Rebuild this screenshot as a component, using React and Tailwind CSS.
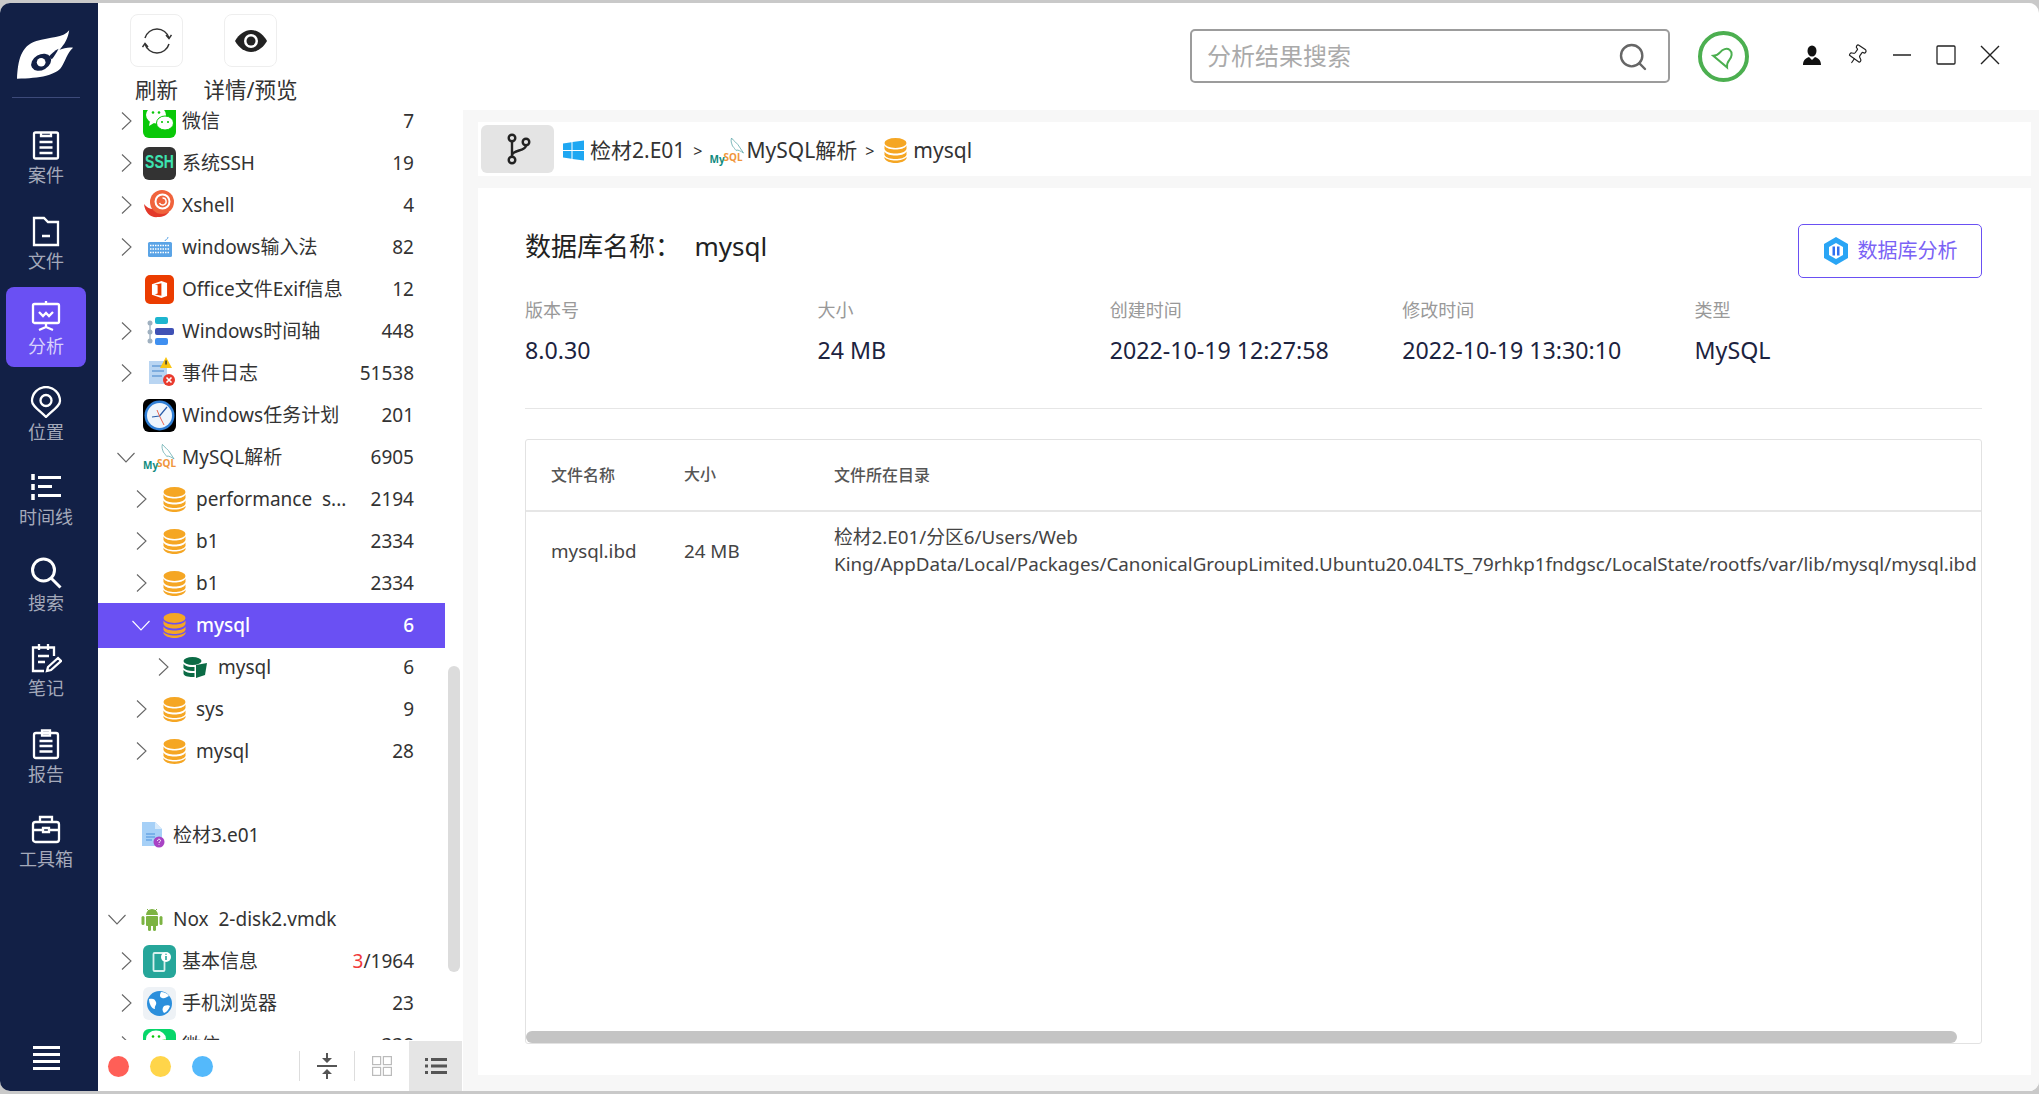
import { Pin, Search } from 'lucide-react';

function Db({ className = 'w-[23px] h-[25px]' }) {
  return (
    <svg viewBox="0 0 23 25" className={className}>
      <ellipse cx="11.5" cy="5" rx="11" ry="5" fill="#f5a623" />
      <path d="M.5 7.5C2 10.5 7 11.5 11.5 11.5S21 10.500 22.500 7.500V11C21 14.500 16 15.500 11.500 15.500S2 14.500.5 11Z" fill="#f5a623" />
      <path d="M.5 13.500C2 16.500 7 17.500 11.500 17.500S21 16.500 22.500 13.500V17C21 20 16 21 11.500 21S2 20 .5 17Z" fill="#f5a623" />
      <path d="M.5 18.800C2 21.500 7 22.500 11.500 22.500S21 21.500 22.500 18.800V20.500C21 23.500 16 25 11.500 25S2 23.500.5 20.500Z" fill="#f5a623" />
    </svg>
  );
}

function MysqlLogo({ small }) {
  return (
    <span className={`relative inline-block ${small ? 'w-[37px] h-[28px]' : 'w-[33px] h-[28px]'}`}>
      <svg viewBox="0 0 34 28" className="absolute inset-0 w-full h-full">
        <path d="M20 1c2 3 6 5 8 9 1 2 3 4 4 6-3-2-5-3-7-3 0 2-2-2-4-4-1-3-2-5-1-8Z" fill="none" stroke="#5fa8ab" strokeWidth="0.8" />
      </svg>
      <span className="absolute left-0 bottom-[1px] text-[10px] leading-none font-bold text-[#0f8a7e]">My</span>
      <span className="absolute left-[14px] bottom-[3px] text-[10px] leading-none font-bold text-[#f0963c]">SQL</span>
    </span>
  );
}

function WeChat({ bg = 'bg-[#09c808]' }) {
  return (
    <span className={`w-[33px] h-[33px] rounded-[6px] flex items-center justify-center ${bg}`}>
      <svg viewBox="0 0 33 33" className="w-[33px] h-[33px]">
        <ellipse cx="13" cy="10" rx="10" ry="8.500" fill="#fff" />
        <path d="M7 16l-1 5 5-3Z" fill="#fff" />
        <ellipse cx="22" cy="18" rx="8.500" ry="7" fill="#fff" stroke="#09c808" strokeWidth="1" />
        <circle cx="10" cy="7.500" r="1.300" fill="#09c808" />
        <circle cx="16" cy="7.500" r="1.300" fill="#09c808" />
        <circle cx="19" cy="17" r="1.100" fill="#09c808" />
        <circle cx="25" cy="17" r="1.100" fill="#09c808" />
      </svg>
    </span>
  );
}

const icons = {
  wechat: <WeChat />,
  wechat2: <WeChat bg="bg-[#07d66a]" />,
  ssh: (
    <span className="w-[33px] h-[33px] rounded-[6px] bg-[#333] flex items-start justify-center pt-[6px] text-[14px] leading-[18px] font-bold text-[#3de3b0] font-['Liberation_Sans',sans-serif]">
      <span className="inline-block scale-y-125">SSH</span>
    </span>
  ),
  xshell: (
    <svg viewBox="0 0 33 33" className="w-[33px] h-[33px]">
      <path d="M1 15c1 9 7 14 14 13 5 0 9-2 11-5L10 20C7 20 3 18 1 15Z" fill="#e3392a" />
      <circle cx="19" cy="13" r="12" fill="#f0633c" />
      <circle cx="19.500" cy="12.500" r="7" fill="none" stroke="#fff" strokeWidth="2" />
      <path d="M19.500 9a3.500 3.500 0 1 1-3 5" fill="none" stroke="#fff" strokeWidth="1.400" />
    </svg>
  ),
  keyboard: (
    <svg viewBox="0 0 33 33" className="w-[33px] h-[33px]">
      <path d="M22 10c0-2 3-1 3-4" fill="none" stroke="#5ba4e6" strokeWidth="1" />
      <rect x="5" y="11" width="24" height="15" rx="1.500" fill="#5ba4e6" />
      <path d="M7 14.500h20M7 18h20M7 21.500h20" stroke="#fff" strokeWidth="1.400" strokeDasharray="1.500 1" />
    </svg>
  ),
  office: (
    <span className="w-[29px] h-[29px] ml-[2px] rounded-[5px] bg-[#eb3c00] flex items-center justify-center">
      <svg viewBox="0 0 18 20" className="w-[17px] h-[19px]">
        <path d="M11 1 1 4.500v11L11 19l6-2V3Zm0 2.500v13L4 15.300l3-1V5.500L4 5Z" fill="#fff" />
      </svg>
    </span>
  ),
  timeline: (
    <svg viewBox="0 0 33 33" className="w-[33px] h-[33px]">
      <path d="M7 7v20" stroke="#a9b8c9" strokeWidth="1.500" />
      <circle cx="7" cy="8" r="2.500" fill="#9fb0c0" />
      <circle cx="7" cy="17" r="2.500" fill="#9fb0c0" />
      <circle cx="7" cy="26" r="2.500" fill="#9fb0c0" />
      <rect x="12" y="2" width="13" height="7" rx="2" fill="#1db5cf" />
      <rect x="12" y="13" width="19" height="7" rx="2" fill="#3f51b5" />
      <rect x="12" y="23" width="13" height="7" rx="2" fill="#3f8ff0" />
    </svg>
  ),
  eventlog: (
    <svg viewBox="0 0 33 33" className="w-[33px] h-[33px]">
      <rect x="6" y="4" width="18" height="23" fill="#b9d5f2" />
      <path d="M9 9h12M9 14h12M9 19h10" stroke="#6a9fd8" strokeWidth="1.500" />
      <path d="M17 11 23 0l6 11Z" fill="#f9c513" />
      <rect x="22.300" y="3.500" width="1.500" height="4" fill="#333" />
      <circle cx="26" cy="23" r="6" fill="#e93b2e" />
      <path d="M23.500 20.500l5 5m0-5-5 5" stroke="#fff" strokeWidth="1.600" />
    </svg>
  ),
  clock: (
    <span className="w-[33px] h-[33px] rounded-[6px] bg-black flex items-center justify-center">
      <svg viewBox="0 0 33 33" className="w-[33px] h-[33px]">
        <circle cx="16.500" cy="16.500" r="15" fill="#2f7fd6" />
        <circle cx="16.500" cy="16.500" r="12.500" fill="#eef5fc" />
        <path d="M16.500 17 24 8M16.500 17 9 18" stroke="#2a5ca8" strokeWidth="1.200" />
        <path d="M16.500 17 21 26M14 11l2.500 6" stroke="#e8553c" strokeWidth="0.900" />
      </svg>
    </span>
  ),
  mysql: <MysqlLogo />,
  db: <Db />,
  table: (
    <svg viewBox="0 0 24 21" className="w-[24px] h-[21px]">
      <ellipse cx="9.500" cy="4" rx="9" ry="4" fill="#0b6b45" />
      <path d="M.5 7c2 2.500 6 3 9 3l2 0v4H9.500C6 14 2 13 .5 11Zm0 6c2 2.500 6 3 9 3h2v4H9.500C5 20 .5 19 .5 16.500Z" fill="#0b6b45" />
      <path d="M13 8 24 6l-2 12-9 3Z" fill="#0b6b45" />
    </svg>
  ),
  doc: (
    <svg viewBox="0 0 24 26" className="w-[24px] h-[26px]">
      <path d="M1 0h13l7 7v17H1Z" fill="#a6d0f7" />
      <path d="M14 0l7 7h-7Z" fill="#d7eafb" />
      <path d="M5 12h9M5 15h9M5 18h6" stroke="#4a8fdc" strokeWidth="1.200" />
      <circle cx="18" cy="20" r="5.500" fill="#a843c4" />
      <path d="M16.500 18.800c0-2 3-2 3-.2 0 1.200-1.500 1-1.500 2.400M18 22.200v.6" stroke="#fff" strokeWidth="1" fill="none" />
    </svg>
  ),
  android: (
    <svg viewBox="0 0 22 24" className="w-[22px] h-[24px]">
      <path d="M5 8a6 6 0 0 1 12 0Z" fill="#7cb342" />
      <path d="M6 2l2 2M16 2l-2 2" stroke="#7cb342" strokeWidth="1" />
      <rect x="5" y="9" width="12" height="10" rx="1" fill="#7cb342" />
      <rect x="0.500" y="9" width="3" height="9" rx="1.500" fill="#7cb342" />
      <rect x="18.500" y="9" width="3" height="9" rx="1.500" fill="#7cb342" />
      <rect x="7" y="17" width="3" height="7" rx="1.500" fill="#7cb342" />
      <rect x="12" y="17" width="3" height="7" rx="1.500" fill="#7cb342" />
    </svg>
  ),
  info: (
    <span className="w-[33px] h-[33px] rounded-[6px] bg-[#26a69a] flex items-center justify-center">
      <svg viewBox="0 0 33 33" className="w-[33px] h-[33px]">
        <rect x="10.500" y="8" width="11" height="18" rx="1" fill="none" stroke="#d6f1ee" strokeWidth="1.800" />
        <circle cx="23" cy="12" r="5" fill="#fff" />
        <path d="M23 11v4M23 8.800v1" stroke="#26a69a" strokeWidth="1.600" />
      </svg>
    </span>
  ),
  browser: (
    <span className="w-[33px] h-[33px] rounded-[6px] bg-[#eef2f6] flex items-center justify-center">
      <svg viewBox="0 0 27 27" className="w-[27px] h-[27px]">
        <circle cx="13.500" cy="13.500" r="12.500" fill="#2b8fdc" />
        <path d="M3 9c4-1 6 0 7 3s-2 4-1 7c-3 0-6-5-6-10Zm12-7c3 0 6 1 8 4-3 1-4 3-7 2s-2-4-1-6Zm3 14c2-1 5-1 6 0-1 3-3 6-6 7-2-2-2-5 0-7Z" fill="#fff" />
      </svg>
    </span>
  ),
};

const rows = [
  { icon: 'wechat', label: '微信', count: '7', arrow: 'right' },
  { icon: 'ssh', label: '系统SSH', count: '19', arrow: 'right' },
  { icon: 'xshell', label: 'Xshell', count: '4', arrow: 'right' },
  { icon: 'keyboard', label: 'windows输入法', count: '82', arrow: 'right' },
  { icon: 'office', label: 'Office文件Exif信息', count: '12' },
  { icon: 'timeline', label: 'Windows时间轴', count: '448', arrow: 'right' },
  { icon: 'eventlog', label: '事件日志', count: '51538', arrow: 'right' },
  { icon: 'clock', label: 'Windows任务计划', count: '201' },
  { icon: 'mysql', label: 'MySQL解析', count: '6905', arrow: 'down' },
  { icon: 'db', label: 'performance  s...', count: '2194', arrow: 'right', level: 2 },
  { icon: 'db', label: 'b1', count: '2334', arrow: 'right', level: 2 },
  { icon: 'db', label: 'b1', count: '2334', arrow: 'right', level: 2 },
  { icon: 'db', label: 'mysql', count: '6', arrow: 'down', level: 2, selected: true },
  { icon: 'table', label: 'mysql', count: '6', arrow: 'right', level: 3 },
  { icon: 'db', label: 'sys', count: '9', arrow: 'right', level: 2 },
  { icon: 'db', label: 'mysql', count: '28', arrow: 'right', level: 2 },
  { icon: 'doc', label: '检材3.e01', level: 0, gap: true },
  { icon: 'android', label: 'Nox  2-disk2.vmdk', arrow: 'down', level: 0, gap: true },
  { icon: 'info', label: '基本信息', alert: '3', count: '/1964', arrow: 'right' },
  { icon: 'browser', label: '手机浏览器', count: '23', arrow: 'right' },
  { icon: 'wechat2', label: '微信', count: '338', arrow: 'right' },
];

const padByLevel = {
  0: 'pl-[10px]',
  1: 'pl-[19px]',
  2: 'pl-[34px]',
  3: 'pl-[56px]',
};

const iconBoxByLevel = {
  0: 'w-[24px] ml-[15px]',
  1: 'w-[33px] ml-[8px]',
  2: 'w-[25px] ml-[13px]',
  3: 'w-[26px] ml-[11px]',
};

function Arrow({ dir, selected }) {
  const stroke = selected ? '#fff' : '#666';
  if (dir === 'down') {
    return (
      <svg viewBox="0 0 18 11" fill="none" stroke={stroke} strokeWidth="1.100" className="w-[18px] h-[11px] shrink-0">
        <path d="M.5 1 9 10l8.500-9" />
      </svg>
    );
  }
  return (
    <svg viewBox="0 0 11 18" fill="none" stroke={stroke} strokeWidth="1.100" className="w-[11px] h-[18px] shrink-0">
      <path d="M1 .5 10 9l-9 8.500" />
    </svg>
  );
}

function TreeRow({ row }) {
  const level = row.level ?? 1;
  return (
    <div
      className={`flex items-center pr-[31px] shrink-0 text-[19px] ${padByLevel[level]} ${
        row.selected ? 'h-[45px] -my-[1.5px] bg-[#6a50f3] text-white font-medium relative' : 'h-[42px] text-[#333]'
      } ${row.gap ? 'mt-[42px]' : ''}`}
    >
      <span className="w-[18px] flex justify-center shrink-0">
        {row.arrow && <Arrow dir={row.arrow} selected={row.selected} />}
      </span>
      <span className={`flex items-center shrink-0 ${iconBoxByLevel[level]}`}>{icons[row.icon]}</span>
      <span className={`whitespace-pre ${level === 0 ? 'ml-[8px]' : level === 1 ? 'ml-[6px]' : level === 2 ? 'ml-[8px]' : 'ml-[9px]'}`}>{row.label}</span>
      <span className="ml-auto">
        {row.alert && <span className="text-[#f03a3a]">{row.alert}</span>}
        {row.count}
      </span>
    </div>
  );
}

const navIconPaths = {
  case: (
    <>
      <rect x="4" y="3.500" width="24" height="26" rx="1.500" />
      <path d="M11 3.500v3.500h10V3.500M9.500 13h13M9.500 18.500h13M9.500 24h13" />
    </>
  ),
  file: <path d="M4 3h10l4 4h10v23H4ZM12 21h8" />,
  analysis: (
    <>
      <rect x="3" y="4" width="26" height="19" rx="1.500" />
      <path d="M16 1v3M9 12l4 4 3-3 3 3 4-4M16 23v4M9 30l7-3 7 3" />
    </>
  ),
  location: (
    <>
      <path d="M16 31C9 24 2 20 2 15a14 14 0 0 1 28 0c0 5-7 9-14 16Z" />
      <circle cx="16" cy="14.500" r="5.500" />
    </>
  ),
  timeline: (
    <>
      <path d="M3 3v6M3 13v6M3 23v6" strokeWidth="3.500" />
      <path d="M8 6.500h23M8 15.500h14M8 24.500h23" strokeWidth="3" />
    </>
  ),
  search: <path d="M13.500 2a11 11 0 1 0 0 22 11 11 0 0 0 0-22ZM21 21l9.500 9.500" strokeWidth="3" />,
  note: <path d="M24 14V5.500H3V29h11M9 2v6M18 2v6M8 14h11M8 20h7M17 29l1-4 10-9 3 3-10 9Z" />,
  report: (
    <>
      <rect x="4" y="5" width="24" height="25" rx="2" />
      <path d="M12 5V2.500h8V5M12 5v2.500h8V5M9.500 13h13M9.500 18h13M9.500 23.500h13" />
    </>
  ),
  tools: (
    <>
      <rect x="3" y="9" width="26" height="20" rx="2.500" />
      <path d="M10 9V4h12v5M3 17h10M19 17h10M13 15h6v4h-6Z" />
    </>
  ),
};

const navItems = [
  { key: 'case', label: '案件' },
  { key: 'file', label: '文件' },
  { key: 'analysis', label: '分析', active: true },
  { key: 'location', label: '位置' },
  { key: 'timeline', label: '时间线' },
  { key: 'search', label: '搜索' },
  { key: 'note', label: '笔记' },
  { key: 'report', label: '报告' },
  { key: 'tools', label: '工具箱' },
];

function NavItem({ item }) {
  return (
    <div
      className={`h-[80px] w-[80px] rounded-[8px] flex flex-col items-center pt-[13px] ${
        item.active ? 'bg-[#6a50f3] text-[#d8d3fb]' : 'text-[#a4a9ba]'
      }`}
    >
      <svg viewBox="0 0 32 32" fill="none" stroke="#fff" strokeWidth="2.300" className="w-[32px] h-[32px]">
        {navIconPaths[item.key]}
      </svg>
      <span className="text-[18px] leading-[24px] mt-[2px]">{item.label}</span>
    </div>
  );
}

const infoCols = [
  { label: '版本号', value: '8.0.30' },
  { label: '大小', value: '24 MB' },
  { label: '创建时间', value: '2022-10-19 12:27:58' },
  { label: '修改时间', value: '2022-10-19 13:30:10' },
  { label: '类型', value: 'MySQL' },
];

export default function App() {
  return (
    <div className="w-[2039px] h-[1094px] bg-[#c9c9c9] pt-[3px] pb-[3px] overflow-hidden font-['Noto_Sans','Noto_Sans_CJK_SC',sans-serif] text-[18px]">
      <div className="h-full flex bg-white rounded-[10px] overflow-hidden">
        {/* Sidebar */}
        <aside className="w-[98px] shrink-0 bg-[#122046] flex flex-col items-center pr-[6px]">
          <div className="h-[95px] w-[68px] border-b border-[#3d4a7a] flex items-start justify-center pt-[26px]">
            <svg viewBox="0 0 60 52" className="w-[58px] h-[51px]">
              <path d="M0 51C1 32 4 17 20 12 34 8 48 9 54 1c-1 8-5 15-10 20 4-1 9-3 14-2-6 5-8 14-12 20-5 8-22 12-46 12Z" fill="#fff" />
              <ellipse cx="25" cy="34" rx="11" ry="8" fill="#122046" transform="rotate(-30 25 34)" />
              <circle cx="25" cy="34" r="4.500" fill="#fff" />
              <path d="M33 28c3-3 6-6 10-8-2 4-4 7-7 11Z" fill="#122046" />
            </svg>
          </div>
          <nav className="mt-[18px] flex flex-col gap-[5.5px]">
            {navItems.map((item) => (
              <NavItem key={item.key} item={item} />
            ))}
          </nav>
          <div className="mt-auto mb-[21px] w-[27px] flex flex-col gap-[4px]">
            <div className="h-[3px] bg-white" />
            <div className="h-[3px] bg-white" />
            <div className="h-[3px] bg-white" />
            <div className="h-[3px] bg-white" />
          </div>
        </aside>

        {/* Tree panel */}
        <div className="w-[365px] shrink-0 flex flex-col">
          <div className="h-[107px] shrink-0 flex gap-[41px] pl-[32px] pt-[11px]">
            <div className="flex flex-col items-center w-[53px]">
              <div className="w-[53px] h-[53px] border border-[#eee] rounded-[8px] flex items-center justify-center">
                <svg viewBox="0 0 30 30" fill="none" stroke="#333" strokeWidth="1.500" className="w-[30px] h-[30px]">
                  <path d="M3 12A12.500 12.500 0 0 1 27 12M27 18A12.500 12.500 0 0 1 3 18" />
                  <path d="M24 9l3 3.500 2.500-3.500M6 21l-3-3.500-2.500 3.500" />
                </svg>
              </div>
              <span className="mt-[8px] text-[21.500px] leading-[30px] text-[#333] whitespace-nowrap">刷新</span>
            </div>
            <div className="flex flex-col items-center w-[53px]">
              <div className="w-[53px] h-[53px] border border-[#eee] rounded-[8px] flex items-center justify-center">
                <svg viewBox="0 0 32 22" className="w-[32px] h-[22px]">
                  <path d="M0 11C4 4 10 0 16 0s12 4 16 11c-4 7-10 11-16 11S4 18 0 11Z" fill="#222" />
                  <circle cx="16" cy="11" r="7" fill="#fff" />
                  <circle cx="16" cy="11" r="4.500" fill="#222" />
                </svg>
              </div>
              <span className="mt-[8px] text-[21.500px] leading-[30px] text-[#333] whitespace-nowrap">详情/预览</span>
            </div>
          </div>
          <div className="flex-1 min-h-0 relative">
            <div className="h-[930px] overflow-hidden w-[347px]">
              <div className="-mt-[10px] flex flex-col">
                {rows.map((row, i) => (
                  <TreeRow key={i} row={row} />
                ))}
              </div>
            </div>
            <div className="absolute right-[3px] top-[556px] w-[12px] h-[306px] rounded-[6px] bg-[#dcdcdc]" />
            <div className="absolute left-0 right-0 bottom-0 h-[50px] bg-white flex items-center pl-[10px]">
              <span className="w-[21px] h-[21px] rounded-full bg-[#ff5f57]" />
              <span className="w-[21px] h-[21px] rounded-full bg-[#ffd54a] ml-[21px]" />
              <span className="w-[21px] h-[21px] rounded-full bg-[#54b9fb] ml-[21px]" />
              <div className="ml-[86px] h-[30px] border-l border-[#ddd] w-[55px] flex items-center justify-center">
                <svg viewBox="0 0 22 28" className="w-[22px] h-[28px]" fill="none" stroke="#555" strokeWidth="2">
                  <path d="M1 14h20M11 1v9M11 27v-9" />
                  <path d="M6 6l5 5 5-5M6 22l5-5 5 5" fill="#555" stroke="none" />
                </svg>
              </div>
              <div className="h-[30px] border-l border-[#ddd] w-[55px] flex items-center justify-center">
                <svg viewBox="0 0 20 20" className="w-[20px] h-[20px]" fill="none" stroke="#bbb" strokeWidth="1.200">
                  <rect x="0.600" y="0.600" width="8" height="8" />
                  <rect x="11.400" y="0.600" width="8" height="8" />
                  <rect x="0.600" y="11.400" width="8" height="8" />
                  <rect x="11.400" y="11.400" width="8" height="8" />
                </svg>
              </div>
              <div className="h-[50px] w-[53px] bg-[#e5e5e5] flex items-center justify-center">
                <svg viewBox="0 0 22 16" className="w-[22px] h-[16px]" fill="#555">
                  <rect x="0" y="0" width="3" height="3" />
                  <rect x="6" y="0" width="16" height="3" />
                  <rect x="0" y="6.500" width="3" height="3" />
                  <rect x="6" y="6.500" width="16" height="3" />
                  <rect x="0" y="13" width="3" height="3" />
                  <rect x="6" y="13" width="16" height="3" />
                </svg>
              </div>
            </div>
          </div>
        </div>

        {/* Right side */}
        <div className="flex-1 min-w-0 flex flex-col">
          <header className="h-[107px] shrink-0 flex items-start relative">
            <div className="ml-[727px] mt-[26px] w-[480px] h-[54px] border-2 border-[#9c9c9c] rounded-[5px] flex items-center pl-[15px] pr-[19px]">
              <input
                placeholder="分析结果搜索"
                className="flex-1 min-w-0 text-[24px] outline-none placeholder:text-[#aaa] bg-transparent"
              />
              <Search className="w-[32px] h-[32px] text-[#666] mt-[2px]" strokeWidth={1.800} />
            </div>
            <div className="ml-[28px] mt-[28px] w-[51px] h-[51px] rounded-full border-[4px] border-[#4caf50] flex items-center justify-center">
              <svg viewBox="0 0 24 24" fill="none" stroke="#4caf50" strokeWidth="2" className="w-[24px] h-[24px] rotate-[40deg]">
                <path d="M12 3c-4 0-6 4-6 8s-2 6-3 7h18c-1-1-3-3-3-7s-2-8-6-8Z" />
              </svg>
            </div>
            <div className="ml-[53px] mt-[41px] flex items-center gap-[24px]">
              <svg viewBox="0 0 20 20" className="w-[20px] h-[20px]" fill="#111">
                <ellipse cx="10" cy="6" rx="4.500" ry="5.500" />
                <path d="M1 20c0-5 3-7 6-8l3 3 3-3c3 1 6 3 6 8Z" />
              </svg>
              <Pin className="w-[22px] h-[22px] text-[#222] rotate-[35deg]" strokeWidth={1.300} />
              <svg viewBox="0 0 20 20" fill="none" stroke="#222" strokeWidth="1.600" className="w-[20px] h-[20px]">
                <path d="M1 10h18" />
              </svg>
              <svg viewBox="0 0 20 20" fill="none" stroke="#222" strokeWidth="1.300" className="w-[20px] h-[20px]">
                <rect x="1" y="1" width="18" height="18" rx="1" />
              </svg>
              <svg viewBox="0 0 20 20" fill="none" stroke="#222" strokeWidth="1.400" className="w-[20px] h-[20px]">
                <path d="M1 1l18 18M19 1 1 19" />
              </svg>
            </div>
          </header>

          <main className="flex-1 min-h-0 bg-[#f7f7f7] pl-[15px] pr-[8px] pt-[12px] pb-[16px] flex flex-col gap-[12px]">
            <div className="h-[54px] bg-white flex items-center pl-[3px] shrink-0 text-[21px] text-[#333]">
              <div className="w-[73px] h-[48px] rounded-[6px] bg-[#e4e4e4] flex items-center justify-center">
                <svg viewBox="0 0 26 32" fill="none" stroke="#222" strokeWidth="2.400" className="w-[26px] h-[32px]">
                  <circle cx="7" cy="5" r="3.300" />
                  <circle cx="21" cy="9" r="3.300" />
                  <circle cx="7" cy="27" r="3.300" />
                  <path d="M7 8.500v15M21 12.500c0 6-14 4-14 10" />
                </svg>
              </div>
              <div className="flex items-center mt-[3px]">
                <svg viewBox="0 0 21 21" className="w-[21px] h-[21px] ml-[9px]">
                  <path d="M0 3.500 8.500 2.300V10H0ZM9.500 2.100 21 .5V10H9.500ZM0 11h8.500v7.700L0 17.500ZM9.500 11H21v9.500L9.500 18.900Z" fill="#1ea7f2" />
                </svg>
                <span className="ml-[6px]">检材2.E01</span>
                <span className="ml-[8px] text-[16px]">&gt;</span>
                <span className="ml-[7px] flex items-center"><MysqlLogo small /></span>
                <span>MySQL解析</span>
                <span className="ml-[8px] text-[16px]">&gt;</span>
                <span className="ml-[10px] flex items-center"><Db /></span>
                <span className="ml-[6px]">mysql</span>
              </div>
            </div>

            <section className="flex-1 min-h-0 bg-white pl-[47px] pr-[49px] pt-[38px] pb-[31px] flex flex-col">
              <div className="flex items-start justify-between shrink-0">
                <div className="text-[26px] leading-[40px] text-[#222] whitespace-pre">数据库名称：  mysql</div>
                <button className="w-[184px] h-[54px] mt-[-2px] border border-[#6a50f3] rounded-[5px] flex items-center justify-center gap-[9px] text-[20px] text-[#7a63f5]">
                  <svg viewBox="0 0 26 28" className="w-[26px] h-[28px]">
                    <path d="M13 0 25 7v14l-12 7-12-7V7Z" fill="#2aa5f5" />
                    <path d="M13 6 20 10v8l-7 4-7-4v-8Z" fill="#fff" />
                    <path d="M9.500 9.500h2.500v9H9.500ZM14 9.500h2.500v9H14Z" fill="#2f6ff0" />
                  </svg>
                  数据库分析
                </button>
              </div>
              <div className="grid grid-cols-[repeat(5,292.4px)] mt-[19px] shrink-0 pb-[44px] border-b border-[#e6e6e6]">
                {infoCols.map((col) => (
                  <div key={col.label}>
                    <div className="text-[18px] leading-[26px] text-[#999]">{col.label}</div>
                    <div className="mt-[13px] text-[23.200px] leading-[28px] text-[#1c2340]">{col.value}</div>
                  </div>
                ))}
              </div>
              <div className="mt-[30px] flex-1 min-h-0 border border-[#e2e2e2] rounded-[3px] flex flex-col relative overflow-hidden">
                <div className="h-[72px] shrink-0 border-b-2 border-[#e6e6e6] flex items-center pl-[25px] text-[16px] font-medium text-[#555]">
                  <span className="w-[133px]">文件名称</span>
                  <span className="w-[150px] mb-[2px]">大小</span>
                  <span>文件所在目录</span>
                </div>
                <div className="flex items-center pl-[25px] pt-[12px] text-[18.800px] leading-[27px] text-[#444]">
                  <span className="w-[133px] shrink-0">mysql.ibd</span>
                  <span className="w-[150px] shrink-0">24 MB</span>
                  <span className="whitespace-pre">{'检材2.E01/分区6/Users/Web\nKing/AppData/Local/Packages/CanonicalGroupLimited.Ubuntu20.04LTS_79rhkp1fndgsc/LocalState/rootfs/var/lib/mysql/mysql.ibd'}</span>
                </div>
                <div className="absolute left-0 bottom-0 w-[1431px] h-[12px] rounded-[6px] bg-[#c4c4c4]" />
              </div>
            </section>
          </main>
        </div>
      </div>
    </div>
  );
}
